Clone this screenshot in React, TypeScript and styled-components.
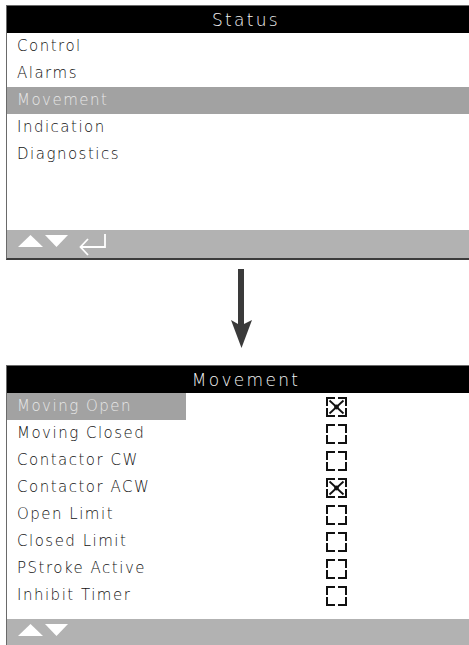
import styled, { createGlobalStyle } from "styled-components";

const GlobalStyle = createGlobalStyle`
  html, body {
    margin: 0;
    padding: 0;
    overflow: hidden;
    background: #fff;
  }
`;

const Page = styled.div`
  padding: 5px 0 0 6px;
  width: 478px;
  font-family: "DejaVu Sans", "Liberation Sans", sans-serif;
`;

const Panel = styled.section`
  width: 478px;
  border: 1px solid #6a6a6a;
  border-right: none;
  border-bottom: 2px solid #3c3c3c;
  background: #fff;
`;

const Header = styled.div`
  height: 27px;
  background: #000;
  color: #f4f4f4;
  font-size: 17px;
  font-weight: 300;
  letter-spacing: 2.3px;
  display: flex;
  align-items: center;
  justify-content: center;
`;

const List = styled.div<{ $height: number }>`
  height: ${(p) => p.$height}px;
  display: flex;
  flex-direction: column;
`;

const MenuRow = styled.div<{ $active?: boolean }>`
  height: 27px;
  display: flex;
  align-items: center;
  padding-left: 10px;
  padding-bottom: 2px;
  box-sizing: border-box;
  font-size: 15px;
  font-weight: 300;
  letter-spacing: 1.5px;
  color: ${(p) => (p.$active ? "#e8e8e8" : "#111")};
  background: ${(p) => (p.$active ? "#a2a2a2" : "transparent")};
`;

const StatusRow = styled.div`
  height: 27px;
  display: grid;
  grid-template-columns: 179px 140px 21px;
  align-items: center;
`;

const Label = styled(MenuRow)`
  padding-left: 10px;
`;

const Footer = styled.div`
  height: 28px;
  background: #b2b2b2;
  display: flex;
  align-items: center;
`;

const ArrowWrap = styled.div`
  height: 105px;
  box-sizing: border-box;
  padding: 9px 0 0 225px;
`;

const NavIcons = ({ enter }: { enter?: boolean }) => (
  <svg width="110" height="28" viewBox="0 0 110 28">
    <polygon points="11,17 23.5,5 36,17" fill="#fff" />
    <polygon points="38,5 61,5 49.5,17" fill="#fff" />
    {enter && (
      <g fill="none" stroke="#fff" strokeWidth="1.8" strokeLinejoin="miter">
        <path d="M98,4 V17 H74" />
        <path d="M81,9 L73.5,17 L81,25" />
      </g>
    )}
  </svg>
);

const Check = ({ on }: { on?: boolean }) => (
  <svg width="21" height="20" viewBox="0 0 21 20">
    <g fill="none" stroke="#111" strokeWidth="2">
      <path d="M1,9 V1 H9" />
      <path d="M12,1 H20 V9" />
      <path d="M1,11 V19 H9" />
      <path d="M12,19 H20 V11" />
      {on && (
        <>
          <path d="M3.5,3.5 L17.5,16.5" strokeWidth="1.8" />
          <path d="M17.5,3.5 L3.5,16.5" strokeWidth="1.8" />
        </>
      )}
    </g>
    {on && <circle cx="10.5" cy="10" r="2.4" fill="#111" />}
  </svg>
);

const DownArrow = () => (
  <svg width="22" height="80" viewBox="0 0 22 80">
    <rect x="7" y="0" width="6" height="56" fill="#3a3a3a" />
    <polygon points="0,51 7,55 13,55 21,51 10.5,79" fill="#3a3a3a" />
  </svg>
);

const menu = ["Control", "Alarms", "Movement", "Indication", "Diagnostics"];

const movement: [string, boolean][] = [
  ["Moving Open", true],
  ["Moving Closed", false],
  ["Contactor CW", false],
  ["Contactor ACW", true],
  ["Open Limit", false],
  ["Closed Limit", false],
  ["PStroke Active", false],
  ["Inhibit Timer", false],
];

export default function App() {
  return (
    <>
      <GlobalStyle />
      <Page>
        <Panel>
          <Header>Status</Header>
          <List $height={197}>
            {menu.map((m) => (
              <MenuRow key={m} $active={m === "Movement"}>
                {m}
              </MenuRow>
            ))}
          </List>
          <Footer>
            <NavIcons enter />
          </Footer>
        </Panel>

        <ArrowWrap>
          <DownArrow />
        </ArrowWrap>

        <Panel>
          <Header>Movement</Header>
          <List $height={226}>
            {movement.map(([name, on], i) => (
              <StatusRow key={name}>
                <Label $active={i === 0}>{name}</Label>
                <span />
                <Check on={on} />
              </StatusRow>
            ))}
          </List>
          <Footer>
            <NavIcons />
          </Footer>
        </Panel>
      </Page>
    </>
  );
}
